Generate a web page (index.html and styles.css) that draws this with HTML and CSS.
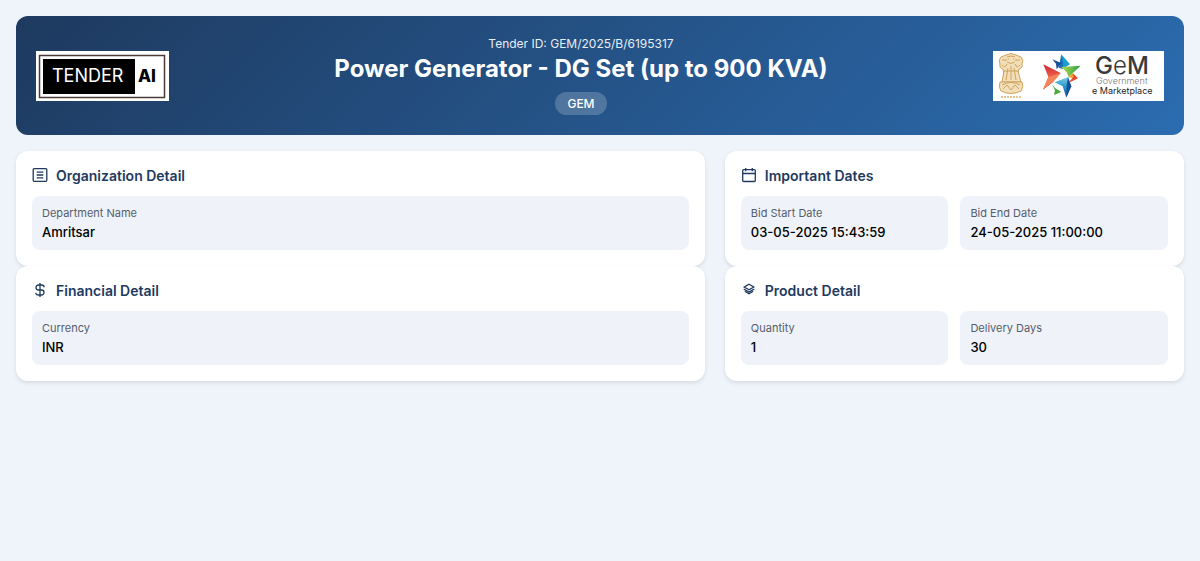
FILE: index.html
```html
<!DOCTYPE html>
<html lang="en">
<head>
  <meta charset="UTF-8">
  <meta name="viewport" content="width=device-width, initial-scale=1.0">
  <title>Tender Detail</title>
  <link rel="stylesheet" href="styles.css">
</head>
<body>
  <header class="header">
    <svg class="logo logo-tender" viewBox="0 0 133 50" role="img" aria-label="Tender AI">
      <rect width="133" height="50" fill="#fff"/>
      <rect x="3.5" y="4.5" width="125" height="42" fill="#fff" stroke="#4a3b36" stroke-width="1.5"/>
      <rect x="7" y="8" width="92" height="35" fill="#000"/>
      <text class="tender-word" x="16" y="31">TENDER</text>
      <text class="tender-ai" x="102" y="31">AI</text>
    </svg>

    <div class="header-content">
      <p class="tender-id">Tender ID: GEM/2025/B/6195317</p>
      <h1>Power Generator - DG Set (up to 900 KVA)</h1>
      <span class="badge">GEM</span>
    </div>

    <svg class="logo logo-gem" viewBox="0 0 171 50" role="img" aria-label="GeM Government e Marketplace">
      <defs>
        <linearGradient id="red" x1="0" y1="0" x2="0" y2="1">
          <stop offset="0" stop-color="#c8283c"/>
          <stop offset="0.45" stop-color="#ee5a45"/>
          <stop offset="1" stop-color="#e23a2e"/>
        </linearGradient>
        <linearGradient id="green" x1="0" y1="0" x2="1" y2="0">
          <stop offset="0" stop-color="#b9d84e"/>
          <stop offset="0.5" stop-color="#6cbf4a"/>
          <stop offset="1" stop-color="#279b48"/>
        </linearGradient>
        <linearGradient id="blue" x1="0" y1="0" x2="0" y2="1">
          <stop offset="0" stop-color="#7fd0e4"/>
          <stop offset="0.5" stop-color="#2494cc"/>
          <stop offset="1" stop-color="#1a4f9c"/>
        </linearGradient>
      </defs>
      <rect width="171" height="50" fill="#fff"/>
      <!-- emblem -->
      <g fill="#f1dfba" stroke="#cfa35c" stroke-width="1">
        <path d="M13 4 Q18 1 23 4 L28 6 Q31 9 29 13 Q30 17 26 18 L25 22 H11 L10 18 Q6 17 7 13 Q5 9 8 6 Z"/>
        <path d="M11 20 L9 31 H28 L25 20 Z"/>
        <path d="M7 31 Q5 36 8 40 Q18 45 28 40 Q31 36 29 31 Z"/>
        <path d="M14 6 Q18 4 22 6 M9 9 H14 M22 9 H27 M14 11 Q18 14 22 11 M15 8 H16 M20 8 H21 M9 14 Q12 18 14 13 M22 13 Q24 18 27 14 M18 15 V29 M15 17 L13 29 M21 17 L23 29 M9 34 Q18 29 27 34 M10 38 L14 34 L18 39 L22 34 L26 38" fill="none"/>
      </g>
      <path d="M8 46 H29" stroke="#e3b071" stroke-width="1.5" stroke-dasharray="2 1"/>
      <!-- star -->
      <g transform="translate(47 -2) scale(0.333)">
        <path d="M64 16 L90 46 L68 60 Z" fill="#1c9fd0"/>
        <path d="M64 16 L70 44 L68 60 L56 56 Z" fill="#1b6fb5"/>
        <path d="M37 31 L64 42 L50 61 L48 44 Z" fill="#1a4f9c"/>
        <path d="M64 54 L122 50 L86 84 L80 70 Z" fill="url(#green)"/>
        <path d="M98 72 L114 88 L84 103 L97 88 Z" fill="#e5482e"/>
        <path d="M86 84 L98 72 L101 84 L97 88 Z" fill="#f39a3a"/>
        <path d="M44 100 L84 84 L94 112 L79 146 L68 112 Z" fill="url(#blue)"/>
        <path d="M84 84 L94 112 L79 146 L80 110 Z" fill="#1a4f9c"/>
        <path d="M36 106 L46 118 L64 129 L42 138 L45 124 Z" fill="#4aa93e"/>
        <path d="M10 46 L62 72 L36 102 L9 122 L25 84 Z" fill="url(#red)"/>
        <path d="M25 84 L62 72 L42 96 L9 122 Z" fill="#f4845a"/>
      </g>
      <text class="gem-word" x="102" y="23">G<tspan class="gem-light">e</tspan>M</text>
      <text class="gem-government" x="103" y="33">Government</text>
      <text class="gem-market" x="99" y="43">e Marketplace</text>
    </svg>
  </header>

  <main class="grid">
    <section class="card">
      <h2>
        <svg class="icon" viewBox="0 0 16 16">
          <rect x="1.2" y="1.7" width="13.6" height="12.6" rx="1"/>
          <path d="M4.7 5.2h6.6M4.7 8h6.6M4.7 10.8h6.6"/>
        </svg>
        Organization Detail
      </h2>
      <div class="fields">
        <div class="field">
          <div class="label">Department Name</div>
          <div class="value">Amritsar</div>
        </div>
      </div>
    </section>

    <section class="card">
      <h2>
        <svg class="icon" viewBox="0 0 16 16">
          <rect x="1.7" y="2.7" width="12.6" height="11.8" rx="1"/>
          <path d="M1.7 6.5h12.6M4.7 1v3.2M11.3 1v3.2"/>
        </svg>
        Important Dates
      </h2>
      <div class="fields two">
        <div class="field">
          <div class="label">Bid Start Date</div>
          <div class="value">03-05-2025 15:43:59</div>
        </div>
        <div class="field">
          <div class="label">Bid End Date</div>
          <div class="value">24-05-2025 11:00:00</div>
        </div>
      </div>
    </section>

    <section class="card">
      <h2>
        <svg class="icon" viewBox="0 0 16 16">
          <path d="M8 1v14M12.2 5.3C12.2 3.8 11 3 9.5 3H6.5a2.5 2.5 0 0 0 0 5h3a2.5 2.5 0 0 1 0 5H6.5C5 13 3.8 12.2 3.8 10.7"/>
        </svg>
        Financial Detail
      </h2>
      <div class="fields">
        <div class="field">
          <div class="label">Currency</div>
          <div class="value">INR</div>
        </div>
      </div>
    </section>

    <section class="card">
      <h2>
        <svg class="icon" viewBox="0 0 16 16">
          <path d="M8 2.2 12.8 5 8 7.8 3.200 5ZM2.700 7 8 10 13.300 7M3.800 9.200 8 11.700 12.200 9.200"/>
        </svg>
        Product Detail
      </h2>
      <div class="fields two">
        <div class="field">
          <div class="label">Quantity</div>
          <div class="value">1</div>
        </div>
        <div class="field">
          <div class="label">Delivery Days</div>
          <div class="value">30</div>
        </div>
      </div>
    </section>
  </main>
</body>
</html>
```

FILE: styles.css
```css
:root {
  --primary: #1e3a5f;
  --primary-light: #2b6cb0;
  --background: #eff3fa;
  --card: #ffffff;
  --field: #eff3f9;
  --text: #000000;
  --muted: #555d6b;
}

* {
  margin: 0;
  padding: 0;
  box-sizing: border-box;
}

body {
  font-family: Inter, "Liberation Sans", sans-serif;
  background: var(--background);
  color: var(--text);
  padding: 16px;
}

.header {
  display: flex;
  align-items: center;
  justify-content: space-between;
  background: linear-gradient(135deg, var(--primary), var(--primary-light));
  color: white;
  padding: 20px;
  border-radius: 12px;
  margin-bottom: 16px;
}

.logo {
  height: 50px;
  flex-shrink: 0;
}

.logo-tender {
  width: 133px;
}

.logo-gem {
  width: 171px;
}

.tender-word {
  font-size: 18px;
  fill: white;
}

.tender-ai {
  font-size: 17px;
  font-weight: 800;
  fill: #000;
}

.gem-word {
  font-size: 24px;
  font-weight: 500;
  fill: #3a3a3c;
}

.gem-light {
  font-weight: 300;
}

.gem-government {
  font-size: 9px;
  font-weight: 300;
  fill: #77777c;
}

.gem-market {
  font-size: 9px;
  font-weight: 400;
  fill: #222;
}

.header-content {
  text-align: center;
}

.tender-id {
  font-size: 12px;
  line-height: 15px;
  margin-bottom: 4px;
  opacity: 0.9;
}

.header h1 {
  font-size: 24px;
  line-height: 28px;
  font-weight: 700;
  margin-bottom: 9px;
}

.badge {
  display: inline-block;
  vertical-align: top;
  background: rgba(255, 255, 255, 0.2);
  padding: 4px 12px;
  border-radius: 20px;
  font-size: 12px;
  line-height: 15px;
  font-weight: 500;
}

.grid {
  display: grid;
  grid-template-columns: 3fr 2fr;
  column-gap: 20px;
}

.card {
  background: var(--card);
  border-radius: 12px;
  padding: 16px;
  box-shadow: 0 2px 4px rgba(0, 0, 0, 0.1);
}

.card h2 {
  display: flex;
  align-items: flex-start;
  gap: 8px;
  font-size: 14px;
  line-height: 17px;
  font-weight: 600;
  color: var(--primary);
  margin-bottom: 12px;
}

.icon {
  width: 16px;
  height: 16px;
  fill: none;
  stroke: var(--primary);
  stroke-width: 1.3;
}

.fields {
  display: grid;
  gap: 12px;
}

.two {
  grid-template-columns: 1fr 1fr;
}

.field {
  background: var(--field);
  border-radius: 8px;
  padding: 10px;
}

.label {
  font-size: 11px;
  line-height: 14px;
  color: var(--muted);
  margin-bottom: 4px;
}

.value {
  font-size: 13px;
  line-height: 16px;
  font-weight: 500;
}
```
